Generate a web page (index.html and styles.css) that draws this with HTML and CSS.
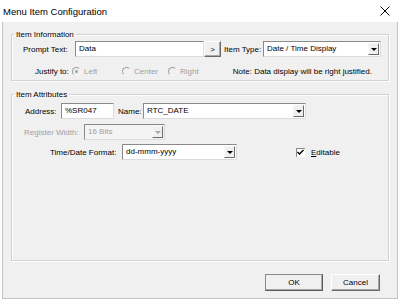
FILE: index.html
```html
<!DOCTYPE html>
<html lang="en">
<head>
    <meta charset="UTF-8">
    <title>Menu Item Configuration</title>
    <link rel="stylesheet" href="styles.css">
</head>
<body>
    <div class="window">
        <div class="titlebar">
            <span class="title">Menu Item Configuration</span>
            <svg class="close" width="10" height="10" viewBox="0 0 10 10">
                <path d="M0.5 0.5 L9.5 9.5 M9.5 0.5 L0.5 9.5" stroke="#000" stroke-width="1" fill="none"/>
            </svg>
        </div>

        <div class="frame">
            <div class="body">
                <!-- Item Information -->
                <fieldset class="group group-info">
                    <legend>Item Information</legend>
                    <div class="row row-tall">
                        <span class="lbl lbl-prompt">Prompt Text:</span>
                        <div class="edit edit-prompt">Data</div>
                        <div class="btn3d btn-more">&gt;</div>
                        <span class="lbl lbl-type">Item Type:</span>
                        <div class="combo combo-type">
                            <span class="combo-text">Date / Time Display</span>
                            <span class="combo-arrow"><i class="tri"></i></span>
                        </div>
                    </div>
                    <div class="row row-justify">
                        <span class="lbl lbl-justify">Justify to:</span>
                        <span class="radio-item radio-left"><i class="radio checked"></i>Left</span>
                        <span class="radio-item radio-center"><i class="radio"></i>Center</span>
                        <span class="radio-item"><i class="radio"></i>Right</span>
                        <span class="note">Note: Data display will be right justified.</span>
                    </div>
                </fieldset>

                <!-- Item Attributes -->
                <fieldset class="group group-attr">
                    <legend>Item Attributes</legend>
                    <div class="row row-tall">
                        <span class="lbl lbl-address">Address:</span>
                        <div class="edit edit-address">%SR047</div>
                        <span class="lbl lbl-name">Name:</span>
                        <div class="combo combo-name">
                            <span class="combo-text">RTC_DATE</span>
                            <span class="combo-arrow"><i class="tri"></i></span>
                        </div>
                    </div>
                    <div class="row row-tall row-reg">
                        <span class="lbl lbl-reg disabled">Register Width:</span>
                        <div class="combo combo-reg disabled">
                            <span class="combo-text">16 Bits</span>
                            <span class="combo-arrow"><i class="tri"></i></span>
                        </div>
                    </div>
                    <div class="row row-tall row-format">
                        <span class="lbl lbl-format">Time/Date Format:</span>
                        <div class="combo combo-format">
                            <span class="combo-text">dd-mmm-yyyy</span>
                            <span class="combo-arrow"><i class="tri"></i></span>
                        </div>
                        <span class="check-item">
                            <svg class="checkbox" width="9" height="9" viewBox="0 0 9 9">
                                <path d="M1.5 4 L3.5 6 L7.5 2" stroke="#000" stroke-width="1.4" fill="none"/>
                            </svg>
                            <span><u>E</u>ditable</span>
                        </span>
                    </div>
                </fieldset>
            </div>

            <div class="footer">
                <div class="btn3d btn btn-ok">OK</div>
                <div class="btn3d btn btn-cancel">Cancel</div>
            </div>
        </div>
    </div>
</body>
</html>
```

FILE: styles.css
```css
body {
    margin: 0;
    background-color: #fff;
    font-family: "Liberation Sans", Arial, sans-serif;
    font-size: 8px;
    color: #000;
}
.window {
    width: 400px;
    height: 299px;
    display: flex;
    flex-direction: column;
}
.titlebar {
    height: 22px;
    flex: none;
    display: flex;
    align-items: center;
    padding-left: 3px;
    background-color: #fff;
}
.title {
    font-size: 9.5px;
}
.close {
    margin-left: auto;
    margin-right: 10px;
}
.frame {
    flex: 1;
    margin-left: 2px;
    width: 396px;
    box-sizing: border-box;
    border: 1px solid #c4c4c4;
    border-top: none;
    background-color: #f0f0f0;
    display: flex;
    flex-direction: column;
}
.body {
    flex: 1;
    display: flex;
    flex-direction: column;
    padding: 7px 8px 0 8px;
}
.group {
    margin: 0;
    min-width: 0;
    border: 1px solid #d2d2d2;
    box-shadow: 1px 1px 0 #fff, inset 1px 1px 0 #fff;
}
.group legend {
    padding: 0 2px;
    margin-left: -9px;
    line-height: 11px;
}
.group-info {
    padding: 1px 6px 2px 11px;
}
.group-attr {
    flex: 1;
    margin-top: 8px;
    padding: 3px 6px 0 11px;
}
.row {
    display: flex;
    align-items: center;
    white-space: nowrap;
}
.row-tall {
    height: 16px;
}
.row-justify {
    height: 14px;
    margin-top: 7px;
}
.row-reg {
    margin-top: 5px;
}
.row-format {
    margin-top: 4px;
}
.lbl {
    flex: none;
}
.disabled {
    color: #a0a0a0;
}

/* sunken edit box */
.edit,
.combo {
    flex: none;
    height: 16px;
    box-sizing: border-box;
    background-color: #fff;
    border: 1px solid;
    border-color: #8a8a8a #dcdcdc #dcdcdc #8a8a8a;
    line-height: 14px;
    padding-left: 3px;
    overflow: hidden;
}
.combo {
    display: flex;
    align-items: center;
    padding-right: 1px;
}
.combo-text {
    flex: 1;
}
.combo-arrow {
    width: 11px;
    height: 12px;
    box-sizing: border-box;
    background-color: #f0f0f0;
    border: 1px solid;
    border-color: #f8f8f8 #6a6a6a #6a6a6a #f8f8f8;
    display: flex;
    align-items: center;
    justify-content: center;
}
.tri {
    width: 0;
    height: 0;
    border-left: 3px solid transparent;
    border-right: 3px solid transparent;
    border-top: 3px solid #000;
    margin-top: 1px;
}
.combo.disabled {
    background-color: #f4f4f4;
}
.combo.disabled .tri {
    border-top-color: #a8a8a8;
}

/* raised button */
.btn3d {
    flex: none;
    box-sizing: border-box;
    background-color: #f0f0f0;
    border: 1px solid;
    border-color: #fff #6a6a6a #6a6a6a #fff;
    box-shadow: inset -1px -1px 0 #a8a8a8;
    display: flex;
    align-items: center;
    justify-content: center;
}

.lbl-prompt { width: 52px; }
.edit-prompt { width: 129px; }
.btn-more { width: 17px; height: 16px; }
.lbl-type { width: 39px; margin-left: 3px; }
.combo-type { width: 118px; }

.lbl-justify { width: 37px; margin-left: 12px; }
.radio-item {
    display: flex;
    align-items: center;
    color: #a0a0a0;
}
.radio-left { width: 50px; }
.radio-center { width: 46px; }
.radio {
    width: 9px;
    height: 9px;
    box-sizing: border-box;
    border-radius: 50%;
    border: 1px solid;
    border-color: #a0a0a0 #f8f8f8 #f8f8f8 #a0a0a0;
    margin-right: 3px;
    display: flex;
    align-items: center;
    justify-content: center;
}
.radio.checked::after {
    content: "";
    width: 3px;
    height: 3px;
    border-radius: 50%;
    background-color: #a0a0a0;
}
.note {
    margin-left: auto;
    margin-right: 10px;
}

.lbl-address { width: 36px; margin-left: 2px; }
.edit-address { width: 53px; }
.lbl-name { width: 25px; margin-left: 4px; }
.combo-name { width: 163px; }

.lbl-reg { width: 60px; margin-left: 1px; }
.combo-reg { width: 81px; }

.lbl-format { width: 72px; margin-left: 27px; }
.combo-format { width: 115px; }
.check-item {
    display: flex;
    align-items: center;
    margin-left: 59px;
}
.checkbox {
    background-color: #fff;
    box-shadow: inset 1px 1px 0 #8a8a8a;
    margin-right: 6px;
}

.footer {
    height: 37px;
    flex: none;
    box-sizing: border-box;
    padding: 13px 17px 0 0;
    display: flex;
    justify-content: flex-end;
    align-items: flex-start;
    gap: 8px;
}
.btn {
    height: 17px;
}
.btn-ok {
    width: 58px;
    border-color: #8a8a8a #5a5a5a #5a5a5a #8a8a8a;
}
.btn-cancel {
    width: 49px;
}
```
